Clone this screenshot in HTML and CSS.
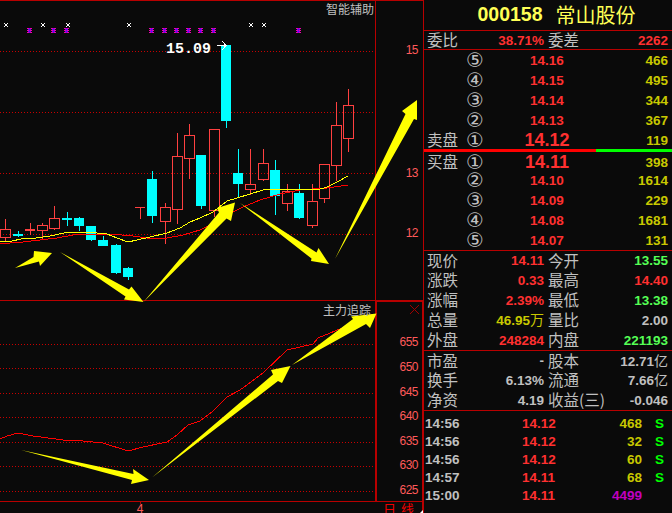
FILE: index.html
```html
<!DOCTYPE html>
<html lang="zh-CN">
<head>
<meta charset="utf-8">
<title>000158 常山股份</title>
<link rel="stylesheet" href="styles.css">
</head>
<body>
<main class="app">
  <svg class="chart" width="424" height="513" viewBox="0 0 424 513">
    <defs>
      <g id="cross"><path class="m-white" d="M-2-2h1v1h-1zM1-2h1v1h-1zM-1-1h2v2h-2zM-2 1h1v1h-1zM1 1h1v1h-1z"/></g>
      <g id="star"><path class="m-mag" d="M-2-2h5v1h-5zM-2 0h5v1h-5zM-2 2h5v1h-5z"/><path class="m-pur" d="M0-2h1v5h-1zM-1-1h3v1h-3zM-1 1h3v1h-3z"/></g>
    </defs>

    <path class="dots" d="M0 51.5H375M0 112.5H375M0 173.5H375M0 234.5H375M0 344.5H375M0 368.5H375M0 393.5H375M0 417.5H375M0 442.5H375M0 466.5H375M0 491.5H375"/>
    <path class="frame" d="M0 .5H424M375.5 0V300M423.5 0V513M0 300.5H375M0 501.5H424M140.5 501V504"/>
    <path class="frame-bold" d="M375 300.500H424M376 300V501M423 300V513"/>

    <g class="marks">
      <use href="#cross" x="6" y="25"/><use href="#cross" x="43" y="25"/><use href="#cross" x="68" y="25"/><use href="#cross" x="129" y="25"/><use href="#cross" x="251" y="25"/><use href="#cross" x="264" y="25"/>
      <use href="#star" x="29" y="30"/><use href="#star" x="53" y="30"/><use href="#star" x="66" y="30"/><use href="#star" x="151" y="30"/><use href="#star" x="164" y="30"/><use href="#star" x="176" y="30"/><use href="#star" x="188" y="30"/><use href="#star" x="200" y="30"/><use href="#star" x="213" y="30"/><use href="#star" x="298" y="30"/>
    </g>

    <path class="c-red" d="M.5 229.500h10v8h-10zM5.500 218.500v11M5.500 237.500v4M37.500 225.500h10v5h-10zM42.500 222.500v3M42.500 230.500v9M49.500 218.500h10v10h-10zM54.500 205.500v13M54.500 228.500v1M160.500 207.500h10v14h-10zM165.500 202.500v5M165.500 221.500v22M172.500 156.500h10v53h-10zM177.500 132.500v24M177.500 209.500v14M184.500 135.500h10v23h-10zM189.500 123.500v12M189.500 158.500v20M209.500 129.500h10v81h-10zM214.500 210.500v6M245.500 184.500h10v5h-10zM250.500 148.500v36M250.500 189.500v5M258.500 163.500h10v16h-10zM263.500 148.500v15M263.500 179.500v1M282.500 191.500h10v12h-10zM287.500 183.500v8M287.500 203.500v7M307.500 201.500h10v24h-10zM312.500 183.500v18M312.500 225.500v2M319.500 164.500h10v34h-10zM324.500 198.500v4M331.500 125.500h10v40h-10zM336.500 101.500v24M336.500 165.500v15M343.500 105.500h10v33h-10zM348.500 88.500v17M348.500 138.500v13M25 229.500h10M25 230.500h10M30.500 222.500v12M135 207.500h10M140.500 207.500v11"/>
    <path class="c-cyan-wick" d="M18.500 231v6M67.500 212v14M79.500 217v14M91.500 240v1M103.500 236v4M116.500 244v30M128.500 267v13M152.500 171v52M201.500 206v3M226.500 121v7M238.500 149v48M275.500 160v55M299.500 184v35"/>
    <path class="c-cyan" d="M74 218h10v8h-10zM86 226h10v14h-10zM98 240h10v6h-10zM111 245h10v28h-10zM123 268h10v9h-10zM147 179h10v37h-10zM196 155h10v51h-10zM221 45h10v76h-10zM233 173h10v11h-10zM270 170h10v26h-10zM294 193h10v25h-10zM13 234h10v2h-10zM62 218h10v2h-10z"/>

    <polyline class="ma-red" points="0,244 10,243 23,242 40,240 57,238 73,235 87,234 110,234 133,236 147,238 167,238 183,235 200,230 210,225 224,217 233,212 243,207 260,200 280,194 300,190 327,188 348,185"/>
    <polyline class="ma-yellow" points="0,241 12,241 21,239 36,238 50,236 64,233 73,232 86,232 107,234 117,238 128,242 137,240 150,237 167,233 180,228 190,222 200,218 213,212 227,201 237,198 250,194 263,190 280,189 300,189 317,190 327,187 337,182 348,176"/>
    <polyline class="ma-red" points="0,439 7,436 18,433 33,436 63,440 83,441 103,443 128,451 143,447 167,442 177,435 188,425 200,421 213,411 227,397 240,390 263,373 287,350 300,347 313,344 318,338 347,326 372,314"/>

    <g class="arrows">
      <polygon points="15,268 33.500,257 34,251 52,253 40,266 39,261.500"/>
      <polygon points="60,252 129,289.500 131.500,286.500 143.500,302 124,299.500 125.500,296.500"/>
      <polygon points="143.500,302 219,212.500 217,208 235,202.500 231,221 226.500,218.500"/>
      <polygon points="240,203 316.500,252.500 318.500,248 329,264 311,261 311.500,258.500"/>
      <polygon points="335,259 405.500,114 402,111 417,100 417,120 414,119"/>
      <polygon points="21,450 133.500,474 133,469 149,480 131,484 132,480"/>
      <polygon points="152,477.500 273,374.500 271,370 290.500,366 282,383 278,381"/>
      <polygon points="292,365 353,319 351,316.500 376.500,313.500 370,328 366,324"/>
    </g>

    <text class="t-high" x="166" y="53">15.09</text>
    <path class="pointer" d="M217 45.500H226M222 41l4 4.500-4 4.500"/>
    <text class="t-title" x="374" y="14">智能辅助</text>
    <text class="t-title" x="371" y="315">主力追踪</text>
    <path class="close" d="M410 305l9 9M419 305l-9 9"/>

    <g class="axis">
      <text x="418" y="54">15</text><text x="418" y="177">13</text><text x="418" y="237">12</text>
      <text x="418" y="346">655</text><text x="418" y="371">650</text><text x="418" y="396">645</text><text x="418" y="420">640</text><text x="418" y="445">635</text><text x="418" y="469">630</text><text x="418" y="494">625</text>
    </g>
    <text class="t-date" x="140" y="512.500">4</text>
    <text class="t-tab" x="383" y="514">日</text><text class="t-tab" x="401" y="514">线</text>
    <polygon class="corner" points="423,510 423,513 420,513"/>
  </svg>

  <section class="panel">
    <h1 class="head"><span class="code">000158</span> 常山股份</h1>
    <div class="ratio sect">
      <span class="lbl">委比</span><span class="num red">38.71%</span><span class="lbl lbl2">委差</span><span class="num red">2262</span>
    </div>

    <div class="book">
      <div class="row"><span></span><span class="ord">⑤</span><span class="price">14.16</span><span class="num vol">466</span></div>
      <div class="row"><span></span><span class="ord">④</span><span class="price">14.15</span><span class="num vol">495</span></div>
      <div class="row"><span></span><span class="ord">③</span><span class="price">14.14</span><span class="num vol">344</span></div>
      <div class="row"><span></span><span class="ord">②</span><span class="price">14.13</span><span class="num vol">367</span></div>
      <div class="row tight"><span class="lbl">卖盘</span><span class="ord">①</span><span class="price big">14.12</span><span class="num vol">119</span></div>
    </div>
    <div class="split"><span class="split-buy"></span><span class="split-sell"></span></div>
    <div class="book sect">
      <div class="row after-split"><span class="lbl">买盘</span><span class="ord">①</span><span class="price big">14.11</span><span class="num vol">398</span></div>
      <div class="row"><span></span><span class="ord">②</span><span class="price">14.10</span><span class="num vol">1614</span></div>
      <div class="row"><span></span><span class="ord">③</span><span class="price">14.09</span><span class="num vol">229</span></div>
      <div class="row"><span></span><span class="ord">④</span><span class="price">14.08</span><span class="num vol">1681</span></div>
      <div class="row"><span></span><span class="ord">⑤</span><span class="price">14.07</span><span class="num vol">131</span></div>
    </div>

    <div class="stats sect">
      <div class="stat tight"><span class="lbl">现价</span><span class="num red">14.11</span><span class="lbl lbl2">今开</span><span class="num green">13.55</span></div>
      <div class="stat"><span class="lbl">涨跌</span><span class="num red">0.33</span><span class="lbl lbl2">最高</span><span class="num red">14.40</span></div>
      <div class="stat"><span class="lbl">涨幅</span><span class="num red">2.39%</span><span class="lbl lbl2">最低</span><span class="num green">13.38</span></div>
      <div class="stat"><span class="lbl">总量</span><span class="num vol">46.95<span class="unit">万</span></span><span class="lbl lbl2">量比</span><span class="num grey">2.00</span></div>
      <div class="stat"><span class="lbl">外盘</span><span class="num red">248284</span><span class="lbl lbl2">内盘</span><span class="num green">221193</span></div>
    </div>
    <div class="stats sect">
      <div class="stat tight"><span class="lbl">市盈</span><span class="num grey">-</span><span class="lbl lbl2">股本</span><span class="num grey">12.71<span class="unit">亿</span></span></div>
      <div class="stat"><span class="lbl">换手</span><span class="num grey">6.13%</span><span class="lbl lbl2">流通</span><span class="num grey">7.66<span class="unit">亿</span></span></div>
      <div class="stat"><span class="lbl">净资</span><span class="num grey">4.19</span><span class="lbl lbl2">收益(三)</span><span class="num grey">-0.046</span></div>
    </div>

    <div class="ticks">
      <div class="tick"><span class="grey">14:56</span><span class="red">14.12</span><span class="num vol">468</span><span class="side">S</span></div>
      <div class="tick"><span class="grey">14:56</span><span class="red">14.12</span><span class="num vol">32</span><span class="side">S</span></div>
      <div class="tick"><span class="grey">14:56</span><span class="red">14.12</span><span class="num vol">60</span><span class="side">S</span></div>
      <div class="tick"><span class="grey">14:57</span><span class="red">14.11</span><span class="num vol">68</span><span class="side">S</span></div>
      <div class="tick"><span class="grey">15:00</span><span class="red">14.11</span><span class="num purple">4499</span><span class="side"></span></div>
    </div>
  </section>
</main>
</body>
</html>
```

FILE: styles.css
```css
* { box-sizing: border-box; margin: 0; padding: 0; }
html, body { width: 672px; height: 513px; overflow: hidden; background: #0a0a0a; }
body { font: bold 13.5px "Liberation Sans", "Noto Sans CJK SC", sans-serif; color: #c0c0c0; }

.app { display: flex; width: 672px; height: 513px; }

/* chart canvas */
.chart { display: block; flex: none; width: 424px; height: 513px; }
.dots { fill: none; stroke: #c80000; stroke-width: 1; stroke-dasharray: 1 2; shape-rendering: crispEdges; }
.frame { fill: none; stroke: #b80000; stroke-width: 1; shape-rendering: crispEdges; }
.frame-bold { fill: none; stroke: #b80000; stroke-width: 2; shape-rendering: crispEdges; }
.m-white { fill: #fff; shape-rendering: crispEdges; }
.m-mag { fill: #f000b0; shape-rendering: crispEdges; }
.m-pur { fill: #7000f0; shape-rendering: crispEdges; }
.c-red { fill: none; stroke: #ff4040; stroke-width: 1; shape-rendering: crispEdges; }
.c-cyan-wick { fill: none; stroke: #00ffff; stroke-width: 1; shape-rendering: crispEdges; }
.c-cyan { fill: #00ffff; shape-rendering: crispEdges; }
.ma-red { fill: none; stroke: #ff0000; stroke-width: 1; shape-rendering: crispEdges; }
.ma-yellow { fill: none; stroke: #ffff00; stroke-width: 1; shape-rendering: crispEdges; }
.arrows polygon { fill: #ffff00; }
.t-high { fill: #fff; font: bold 15px "Liberation Mono", monospace; }
.pointer { fill: none; stroke: #fff; stroke-width: 1; shape-rendering: crispEdges; }
.t-title { fill: #c0c0c0; font: 400 12px "Noto Sans CJK SC", sans-serif; text-anchor: end; }
.close { fill: none; stroke: #a00000; stroke-width: 1; }
.axis text { fill: #ff5a5a; font: 400 12px "Liberation Sans", sans-serif; letter-spacing: -.5px; text-anchor: end; }
.t-date { fill: #ff5a5a; font: 400 12px "Liberation Sans", sans-serif; text-anchor: middle; }
.t-tab { fill: #f00000; font: 400 13px "Noto Sans CJK SC", sans-serif; }
.corner { fill: #fff; }

/* quote panel */
.panel { display: flex; flex-direction: column; flex: 1; min-width: 0; }
.head {
  display: flex; align-items: center; justify-content: center; gap: 13px;
  height: 31px; padding-left: 17px; border-bottom: 1px solid #b80000;
  color: #ffff55; font: 400 20px/1 "Noto Sans CJK SC", sans-serif; white-space: nowrap;
}
.code { font: bold 19.500px/1 "Liberation Sans", sans-serif; }
.sect { border-bottom: 1px solid #b80000; }

.lbl { font: 400 15.500px/1 "Noto Sans CJK SC", sans-serif; color: #c0c0c0; white-space: nowrap; }
.lbl2 { padding-left: 4px; }
.num { text-align: right; white-space: nowrap; }
.unit { font: 400 14px/1 "Noto Sans CJK SC", sans-serif; }
.red { color: #ff3030; }
.green { color: #55ff55; }
.grey { color: #c0c0c0; }
.vol { color: #c8c800; }
.purple { color: #c000c0; }

.ratio, .stat {
  display: grid; grid-template-columns: 34px 83px 64px 60px; align-items: center; padding-left: 3px;
}
.ratio { height: 19px; }
.stat { height: 20px; }
.stat.tight { height: 19px; }

.book { display: flex; flex-direction: column; }
.row {
  display: grid; grid-template-columns: 34px 26px 120px 61px; align-items: center;
  height: 20px; padding-left: 3px;
}
.row.tight { height: 19px; }
.row.after-split { height: 18px; }
.ord { padding-left: 5px; font: 400 20px/1 "DejaVu Sans", sans-serif; color: #c0c0c0; white-space: nowrap; }
.price { text-align: center; color: #ff3030; }
.big { font-size: 18px; line-height: 1; }

.split { display: flex; flex: none; height: 3px; }
.split-buy { width: 172px; background: #ff0000; }
.split-sell { flex: 1; background: #00ff00; }

.ticks { display: flex; flex-direction: column; padding: 3px 0 0 1px; }
.tick { display: grid; grid-template-columns: 97px 60px 60px 1fr; align-items: center; height: 18px; }
.side { padding-left: 13px; color: #00ff00; }
```
